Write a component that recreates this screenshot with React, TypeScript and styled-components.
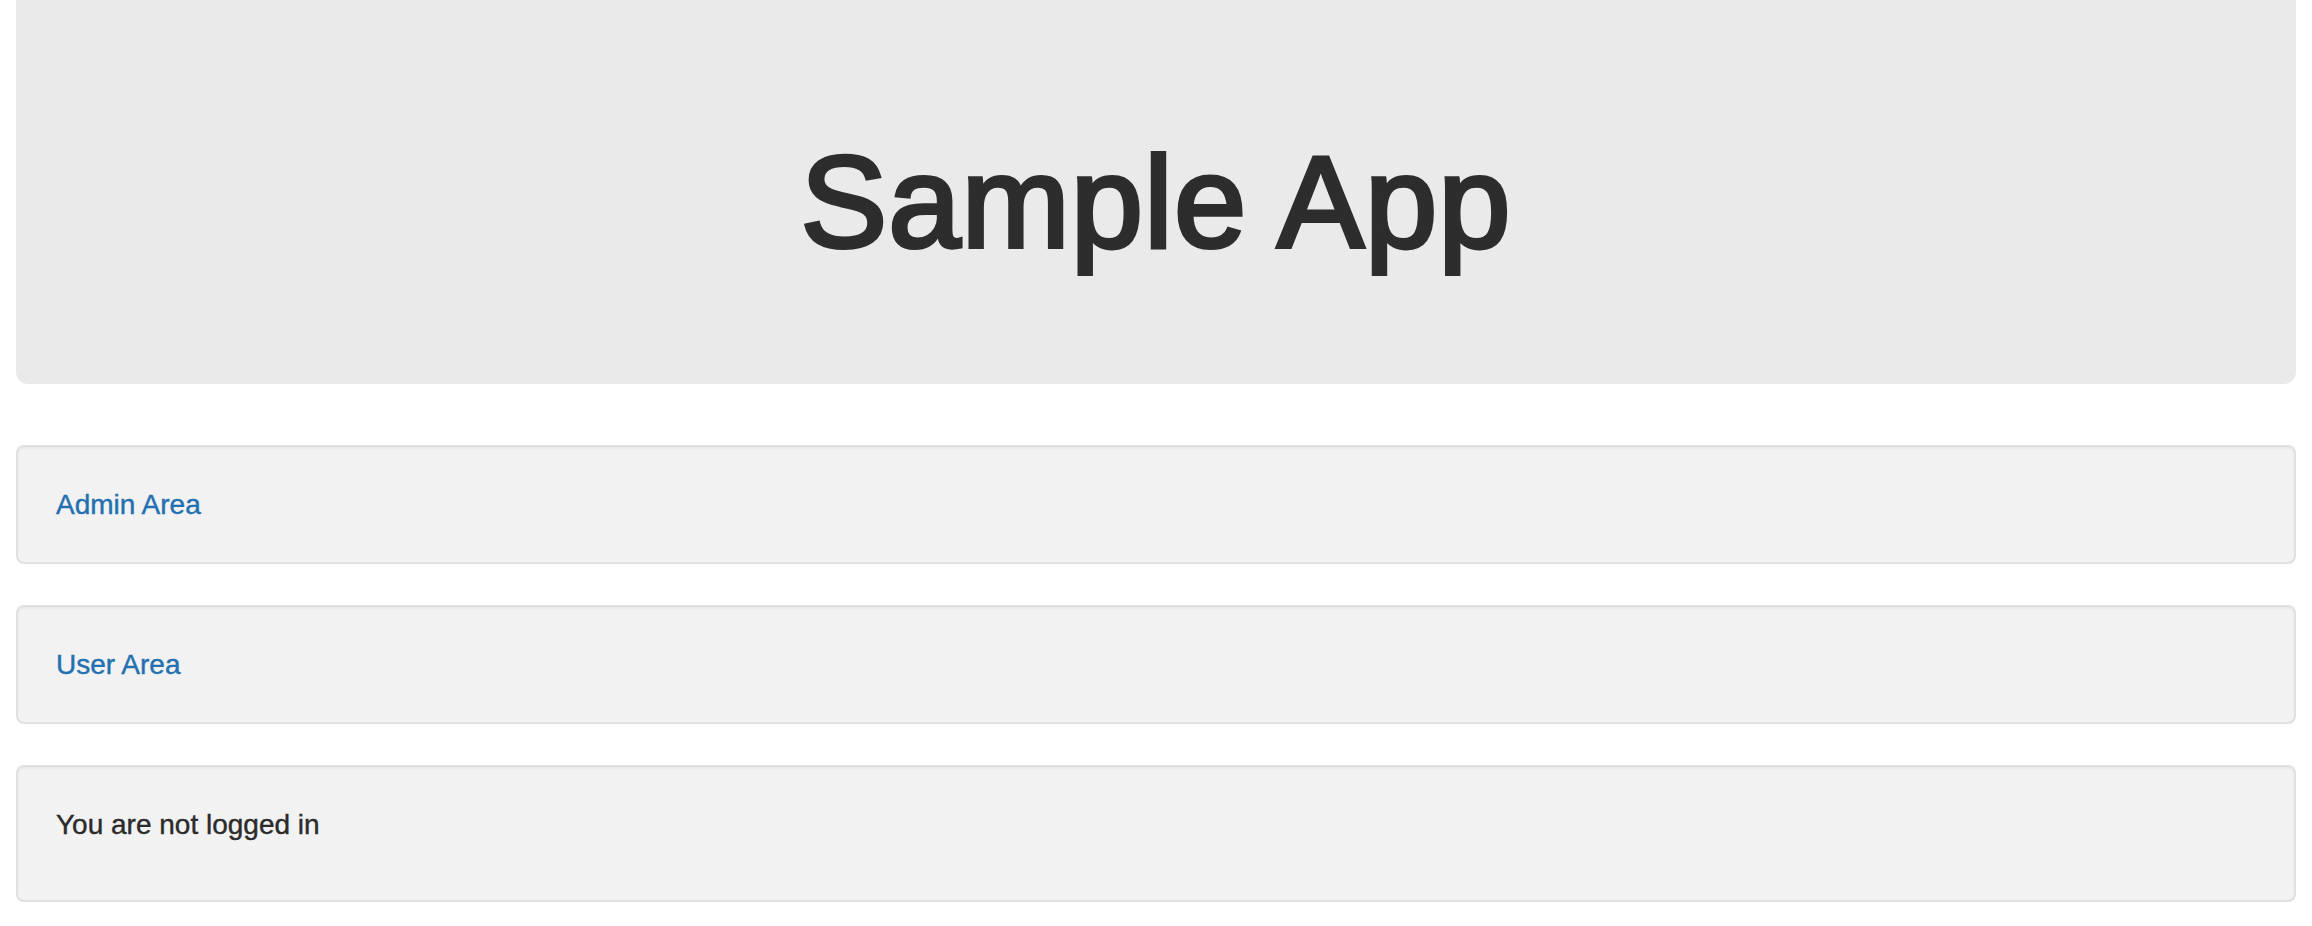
import React from 'react'
import styled, { createGlobalStyle } from 'styled-components'

const GlobalStyle = createGlobalStyle`
    html,
    body {
        margin: 0;
        padding: 0;
        background: #fff;
    }
    body {
        font-family: 'Liberation Sans', Arial, Helvetica, sans-serif;
        color: #2b2b2b;
    }
`

const Page = styled.div`
    padding: 0 16px;
`

const Jumbotron = styled.div`
    background: #eaeaea;
    border-radius: 0 0 12px 12px;
    padding: 131px 0 110px;
    margin-bottom: 61px;
    text-align: center;
    h1 {
        margin: 0;
        font-size: 130px;
        font-weight: 400;
        line-height: 143px;
        letter-spacing: 1px;
        color: #2d2d2d;
        -webkit-text-stroke: 4px #2d2d2d;
    }
`

const Well = styled.div<{ $extra?: boolean }>`
    background: #f2f2f2;
    border: 2px solid #e0e0e0;
    border-radius: 8px;
    box-shadow: inset 0 2px 2px rgba(0, 0, 0, 0.04);
    padding: 38px 38px ${(p) => (p.$extra ? '55px' : '37px')};
    margin-bottom: 41px;
    font-size: 28px;
    line-height: 40px;
    -webkit-text-stroke: 0.4px currentColor;
    a {
        color: #2270b0;
        text-decoration: none;
    }
`

export default function App(): React.ReactElement {
    return (
        <Page>
            <GlobalStyle />
            <Jumbotron>
                <h1>Sample App</h1>
            </Jumbotron>
            <Well>
                <a href="#admin">Admin Area</a>
            </Well>
            <Well>
                <a href="#user">User Area</a>
            </Well>
            <Well $extra>You are not logged in</Well>
        </Page>
    )
}
